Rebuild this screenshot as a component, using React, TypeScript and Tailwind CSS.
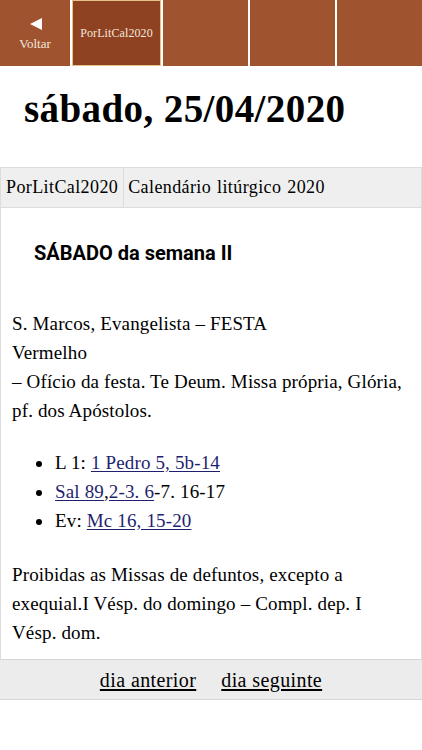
import React from "react";

const serif = { fontFamily: '"Liberation Serif", "DejaVu Serif", serif' };

const Tile = ({ children, active }: { children?: React.ReactNode; active?: boolean }) => (
  <div
    className={
      active
        ? "h-full flex-1 flex items-center justify-center bg-[#8e4222] border border-[#e3c488] text-[#f3e6dc] text-[12px] tracking-[0.1px]"
        : "h-full flex-1 bg-[#a0532f]"
    }
  >
    {children}
  </div>
);

const Ref = ({ children }: { children: React.ReactNode }) => (
  <a href="#" className="text-[#1f1f70] underline underline-offset-2">
    {children}
  </a>
);

const App = () => {
  return (
    <div className="w-[422px] min-h-[750px] bg-white text-black" style={serif}>
      <div className="h-[66px] flex gap-[2px]">
        <div className="w-[70px] h-full bg-[#a0532f] flex flex-col items-center justify-center text-[#f3e6dc] text-[13px] leading-none pt-[1px]">
          <svg width="13" height="12" viewBox="0 0 13 12" className="mb-[7px] ml-[2px]">
            <path d="M0 6 L12 0 L12 12 Z" fill="#ffffff" />
          </svg>
          Voltar
        </div>
        <div className="w-[89px] h-full">
          <Tile active>PorLitCal2020</Tile>
        </div>
        <div className="flex-1 h-full"><Tile /></div>
        <div className="flex-1 h-full"><Tile /></div>
        <div className="flex-1 h-full"><Tile /></div>
      </div>

      <h1 className="pl-[24px] pt-[21px] h-[101px] text-[39px] tracking-[0.4px] font-bold leading-[44px]">
        sábado, 25/04/2020
      </h1>

      <div className="border border-[#dcdcdc] text-[19px] tracking-[0.15px]">
        <div className="flex bg-[#efefef] h-[40px] items-center border-b border-[#dcdcdc] text-[18px] tracking-[0.4px] [word-spacing:1px]">
          <div className="pl-[5px] pr-[5px] h-full flex items-center border-r border-[#dcdcdc]">PorLitCal2020</div>
          <div className="pl-[4px] h-full flex items-center">Calendário litúrgico 2020</div>
        </div>
        <div className="px-[11px] pt-[32px] pb-[12px] leading-[29px] whitespace-nowrap">
          <h2
            className="pl-[22px] text-[20px] tracking-normal font-bold leading-[26px]"
            style={{ fontFamily: "Roboto, sans-serif" }}
          >
            SÁBADO da semana II
          </h2>
          <p className="mt-[43px]">
            S. Marcos, Evangelista – FESTA
            <br />
            Vermelho
            <br />– Ofício da festa. Te Deum. Missa própria, Glória,
            <br />
            pf. dos Apóstolos.
          </p>
          <ul className="list-disc pl-[42px] mt-[23px]">
            <li className="pl-[1px]">
              L 1: <Ref>1 Pedro 5, 5b-14</Ref>
            </li>
            <li className="pl-[1px]">
              <Ref>Sal 89</Ref>,<Ref>2-3. 6</Ref>-7. 16-17
            </li>
            <li className="pl-[1px]">
              Ev: <Ref>Mc 16, 15-20</Ref>
            </li>
          </ul>
          <p className="mt-[25px]">
            Proibidas as Missas de defuntos, excepto a
            <br />
            exequial.I Vésp. do domingo – Compl. dep. I
            <br />
            Vésp. dom.
          </p>
        </div>
      </div>
      <div className="bg-[#ececec] h-[41px] border-b border-t -mt-px border-[#d6d6d6] flex items-center justify-center gap-[25px] text-[20px] tracking-[0.4px]">
        <a href="#" className="underline underline-offset-2">dia anterior</a>
        <a href="#" className="underline underline-offset-2">dia seguinte</a>
      </div>
    </div>
  );
};

export default App;
